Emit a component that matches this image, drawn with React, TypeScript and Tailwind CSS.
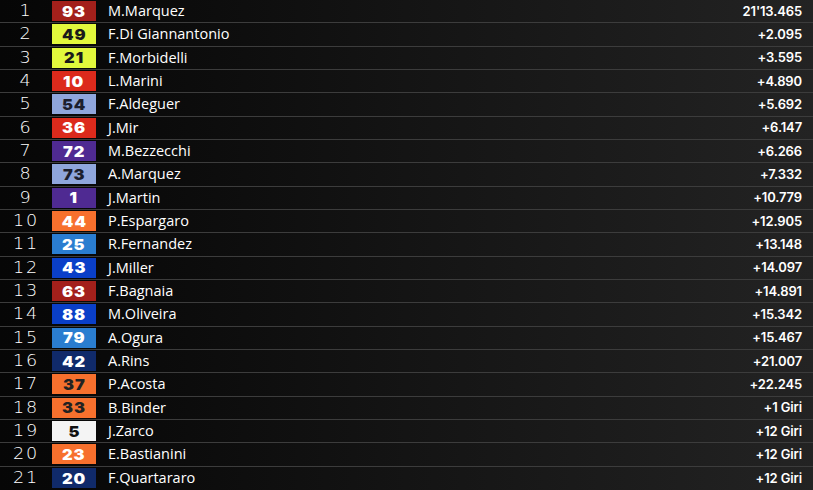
const rows = [
  { pos: 1, num: "93", bg: "bg-[#a3201b]", fg: "text-white", name: "M.Marquez", time: "21'13.465" },
  { pos: 2, num: "49", bg: "bg-[#e2f83c]", fg: "text-[#1a1a1a]", name: "F.Di Giannantonio", time: "+2.095" },
  { pos: 3, num: "21", bg: "bg-[#e2f83c]", fg: "text-[#1a1a1a]", name: "F.Morbidelli", time: "+3.595" },
  { pos: 4, num: "10", bg: "bg-[#dc2a1c]", fg: "text-white", name: "L.Marini", time: "+4.890" },
  { pos: 5, num: "54", bg: "bg-[#8fa6dc]", fg: "text-[#1c1f2e]", name: "F.Aldeguer", time: "+5.692" },
  { pos: 6, num: "36", bg: "bg-[#dc2a1c]", fg: "text-white", name: "J.Mir", time: "+6.147" },
  { pos: 7, num: "72", bg: "bg-[#4f2a92]", fg: "text-white", name: "M.Bezzecchi", time: "+6.266" },
  { pos: 8, num: "73", bg: "bg-[#8fa6dc]", fg: "text-[#1c1f2e]", name: "A.Marquez", time: "+7.332" },
  { pos: 9, num: "1", bg: "bg-[#4f2a92]", fg: "text-white", name: "J.Martin", time: "+10.779" },
  { pos: 10, num: "44", bg: "bg-[#f7702d]", fg: "text-white", name: "P.Espargaro", time: "+12.905" },
  { pos: 11, num: "25", bg: "bg-[#2a7dd0]", fg: "text-white", name: "R.Fernandez", time: "+13.148" },
  { pos: 12, num: "43", bg: "bg-[#0a3fc8]", fg: "text-white", name: "J.Miller", time: "+14.097" },
  { pos: 13, num: "63", bg: "bg-[#a3201b]", fg: "text-white", name: "F.Bagnaia", time: "+14.891" },
  { pos: 14, num: "88", bg: "bg-[#0a3fc8]", fg: "text-white", name: "M.Oliveira", time: "+15.342" },
  { pos: 15, num: "79", bg: "bg-[#2a7dd0]", fg: "text-white", name: "A.Ogura", time: "+15.467" },
  { pos: 16, num: "42", bg: "bg-[#102a6a]", fg: "text-white", name: "A.Rins", time: "+21.007" },
  { pos: 17, num: "37", bg: "bg-[#f7702d]", fg: "text-[#222]", name: "P.Acosta", time: "+22.245" },
  { pos: 18, num: "33", bg: "bg-[#f7702d]", fg: "text-[#222]", name: "B.Binder", time: "+1 Giri" },
  { pos: 19, num: "5", bg: "bg-[#f4f4f4]", fg: "text-[#111]", name: "J.Zarco", time: "+12 Giri" },
  { pos: 20, num: "23", bg: "bg-[#f7702d]", fg: "text-white", name: "E.Bastianini", time: "+12 Giri" },
  { pos: 21, num: "20", bg: "bg-[#102a6a]", fg: "text-white", name: "F.Quartararo", time: "+12 Giri" },
];

export default function App() {
  return (
    <div className="w-[813px] h-[490px] overflow-hidden bg-gradient-to-r from-[#060606] via-[#141414] to-[#232323] grid grid-rows-[repeat(21,1fr)] text-white">
      {rows.map((r) => (
        <div
          key={r.pos}
          className="flex items-center border-b border-[#3c3c3c] last:border-b-0"
        >
          {/* position */}
          <div className="w-[52px] text-center font-['DejaVu_Sans',sans-serif] font-extralight text-[16px] tracking-[0.1em] leading-none scale-x-110">
            {r.pos}
          </div>

          {/* rider number */}
          <div
            className={`${r.bg} ${r.fg} w-[44px] h-[20px] flex items-center justify-center font-['Inter',sans-serif] font-black text-[15px] tracking-[0.06em] leading-none`}
          >
            <span className="scale-x-110">{r.num}</span>
          </div>

          <div className="ml-[12px] flex-1 font-['Open_Sans',sans-serif] text-[14.5px] leading-none">
            {r.name}
          </div>

          <div className="pr-[11px] font-['Inter',sans-serif] font-semibold text-[13px] tracking-[-0.01em] leading-none">
            {r.time}
          </div>
        </div>
      ))}
    </div>
  );
}
